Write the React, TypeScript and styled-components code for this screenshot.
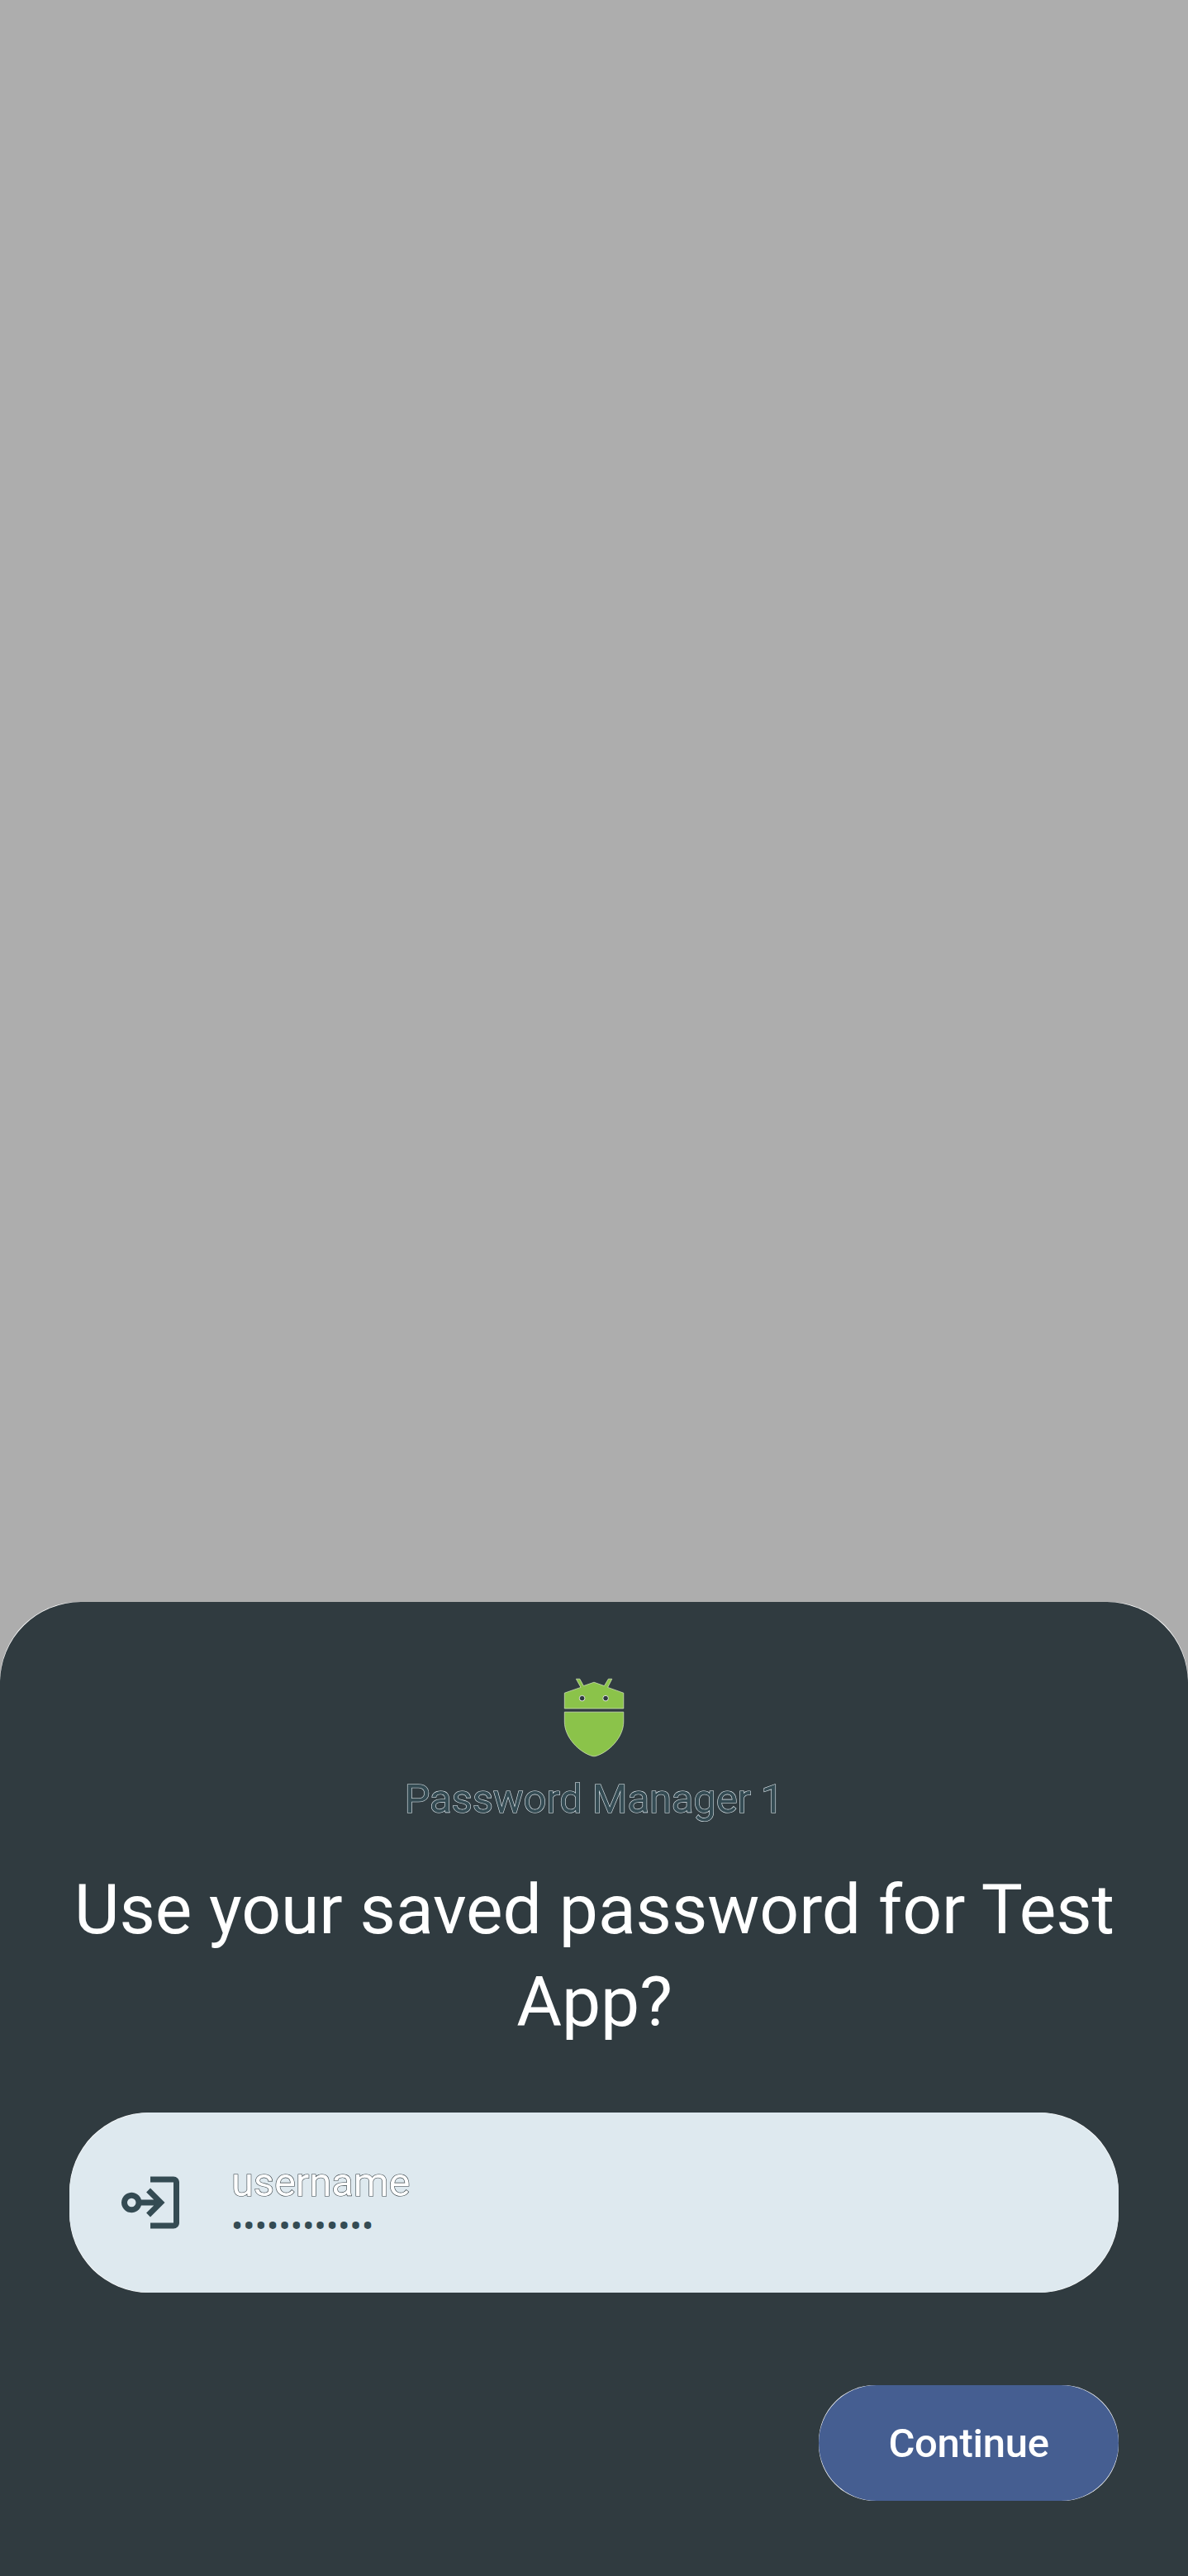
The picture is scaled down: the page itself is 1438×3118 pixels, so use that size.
import React from "react";
import styled, { createGlobalStyle } from "styled-components";

const GlobalStyle = createGlobalStyle`
  html, body { margin: 0; padding: 0; background: #adadad; }
`;

const Screen = styled.div`
  box-sizing: border-box;
  width: 1438px;
  height: 3118px;
  display: flex;
  flex-direction: column;
  justify-content: flex-end;
  background: #adadad;
  font-family: Roboto, "Noto Sans", sans-serif;
  overflow: hidden;
`;

/* Light rim that shows only along the rounded corners of its child. */
const SheetRim = styled.div`
  background: #ffffff;
  border-radius: 96px 96px 0 0;
`;

const Sheet = styled.main`
  box-sizing: border-box;
  height: 1179px;
  padding: 91px 84px;
  display: flex;
  flex-direction: column;
  align-items: center;
  background: #303b40;
  border-radius: 98px 98px 0 0;
`;

const ProviderIcon = styled.svg`
  display: block;
  width: 84px;
  height: 98px;
  flex: none;
`;

const ProviderName = styled.div`
  margin-top: 15px;
  font-size: 49px;
  line-height: 70px;
  letter-spacing: -0.15px;
  white-space: nowrap;
  color: #344b53;
  -webkit-text-stroke: 1.2px #dfe9ee;
  paint-order: stroke fill;
`;

const Title = styled.h1`
  box-sizing: border-box;
  margin: 43px 0 0;
  width: 1270px;
  padding-left: 1px;
  text-align: center;
  font-size: 84px;
  font-weight: 400;
  line-height: 112px;
  letter-spacing: -0.03px;
  color: #ffffff;
`;

const EntryRim = styled.div`
  margin-top: 77px;
  width: 1270px;
  background: #ffffff;
  border-radius: 96px;
`;

const Entry = styled.div`
  box-sizing: border-box;
  height: 218px;
  padding-left: 56px;
  display: flex;
  align-items: center;
  gap: 56px;
  background: #dee9ef;
  border-radius: 98px;
`;

const EntryIcon = styled.svg`
  display: block;
  width: 84px;
  height: 84px;
  flex: none;
`;

const EntryText = styled.div`
  display: flex;
  flex-direction: column;
`;

const Username = styled.span`
  font-size: 49px;
  line-height: 70px;
  letter-spacing: -0.15px;
  color: #ffffff;
  -webkit-text-stroke: 1.2px #303b40;
  paint-order: stroke fill;
`;

const Password = styled.span`
  margin-top: -7px;
  margin-bottom: 7px;
  font-size: 42px;
  line-height: 49px;
  letter-spacing: 0.19px;
  color: #344b53;
`;

const Actions = styled.div`
  width: 1270px;
  margin-top: 112px;
  display: flex;
  justify-content: flex-end;
`;

const ButtonRim = styled.div`
  background: #ffffff;
  border-radius: 68px;
`;

const Button = styled.button`
  display: block;
  box-sizing: border-box;
  width: 363px;
  height: 140px;
  padding: 2px 0 0;
  border: 0;
  border-radius: 70px;
  background: #455e91;
  color: #ffffff;
  font-family: inherit;
  font-size: 49px;
  font-weight: 500;
  line-height: 138px;
  letter-spacing: -0.3px;
`;

export default function App() {
  return (
    <>
      <GlobalStyle />
      <Screen>
        <SheetRim>
          <Sheet>
            <ProviderIcon viewBox="0 0 84 98">
              <g fill="#8bc34a" stroke="#dcebc6" strokeWidth="0.7">
                <path d="M6.3 19.2 L26 12.4 L20.4 2.2 H24.8 L29.4 10.6 L42 6.2 L54.4 10.6 L59.4 2.2 H63.8 L58.6 12.4 L77.8 19.2 V38 H6.3 Z" />
                <path d="M6.3 42.2 H77.8 V54 C77.8 73 60 91 44 95.6 Q42 96 40 95.6 C24 91 6.3 73 6.3 54 Z" />
              </g>
              <g fill="#303b40" stroke="#ffffff" strokeWidth="0.8">
                <circle cx="27.6" cy="25.6" r="3.3" />
                <circle cx="56.1" cy="25.6" r="3.3" />
              </g>
            </ProviderIcon>
            <ProviderName>Password Manager 1</ProviderName>
            <Title>Use your saved password for Test App?</Title>
            <EntryRim>
              <Entry>
                <EntryIcon viewBox="0 0 24 24" fill="#344b53">
                  <path d="M20 3 H12 V5 H20 V19 H12 V21 H20 C21.1 21 22 20.1 22 19 V5 C22 3.9 21.1 3 20 3 Z" />
                  <path
                    fillRule="evenodd"
                    d="M12 7 L10.6 8.4 L13.2 11 H8.85 A3.5 3.5 0 1 0 8.85 13 H13.2 L10.6 15.6 L12 17 L17 12 Z M5.5 13.5 A1.5 1.5 0 1 1 5.5 10.5 A1.5 1.5 0 1 1 5.5 13.5 Z"
                  />
                </EntryIcon>
                <EntryText>
                  <Username>username</Username>
                  <Password>••••••••••••</Password>
                </EntryText>
              </Entry>
            </EntryRim>
            <Actions>
              <ButtonRim>
                <Button type="button">Continue</Button>
              </ButtonRim>
            </Actions>
          </Sheet>
        </SheetRim>
      </Screen>
    </>
  );
}
